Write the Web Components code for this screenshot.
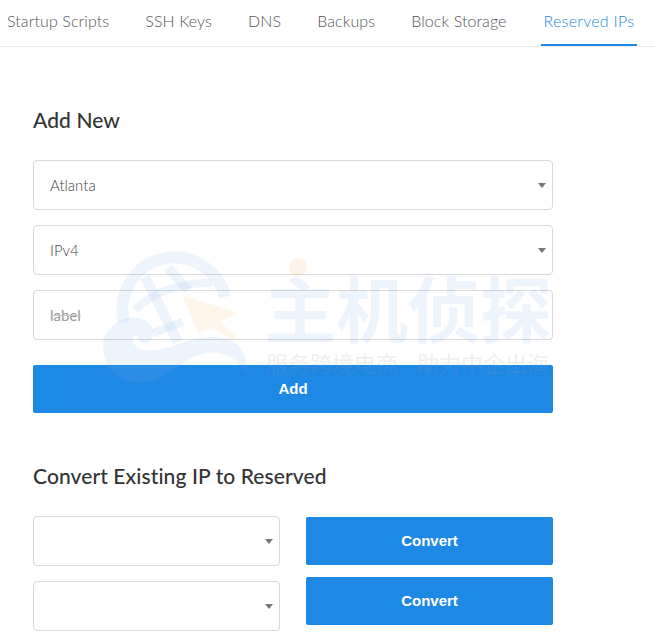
<!DOCTYPE html>
<html lang="en">
<head>
<meta charset="utf-8">
<title>Reserved IPs</title>
<style>
  html, body { margin: 0; background: #fff; }
  body { font-family: "Lato", "Open Sans", sans-serif; color: #333; }
</style>
</head>
<body>
<tab-bar>
  <tab-item>Startup Scripts</tab-item>
  <tab-item>SSH Keys</tab-item>
  <tab-item>DNS</tab-item>
  <tab-item>Backups</tab-item>
  <tab-item>Block Storage</tab-item>
  <tab-item active>Reserved IPs</tab-item>
</tab-bar>
<reserved-page>
  <form-section heading="Add New" slot="add">
    <div class="stack">
      <select-box>Atlanta</select-box>
      <select-box>IPv4</select-box>
      <text-box placeholder="label"></text-box>
      <blue-button high>Add</blue-button>
    </div>
  </form-section>
  <form-section heading="Convert Existing IP to Reserved" slot="convert">
    <convert-grid>
      <select-box slot="left"></select-box>
      <select-box slot="left"></select-box>
      <blue-button slot="right">Convert</blue-button>
      <blue-button slot="right">Convert</blue-button>
    </convert-grid>
  </form-section>
</reserved-page>
<water-mark></water-mark>

<script>
class TabBar extends HTMLElement {
    constructor() {
        super();
        this.attachShadow({ mode: 'open' }).innerHTML = `
            <style>
                :host {
                    display: flex;
                    height: 47px;
                    box-sizing: border-box;
                    padding-left: 4px;
                    border-bottom: 1px solid #eee;
                    gap: 30px;
                }
            </style>
            <slot></slot>
        `;
    }
}

class TabItem extends HTMLElement {
    constructor() {
        super();
        this.attachShadow({ mode: 'open' }).innerHTML = `
            <style>
                :host {
                    display: block;
                    height: 46px;
                    box-sizing: border-box;
                    padding: 12px 3px 0;
                    font: 300 16px/18px "Lato", sans-serif;
                    letter-spacing: .1px;
                    color: #555;
                }
                :host([active]) {
                    margin-left: 1px;
                    letter-spacing: .25px;
                    color: #1e88e5;
                    border-bottom: 2px solid #1e88e5;
                }
            </style>
            <slot></slot>
        `;
    }
}

class ReservedPage extends HTMLElement {
    constructor() {
        super();
        this.attachShadow({ mode: 'open' }).innerHTML = `
            <style>
                :host {
                    display: flex;
                    flex-direction: column;
                    gap: 49px;
                    width: 520px;
                    padding: 59px 0 0 33px;
                }
            </style>
            <slot name="add"></slot>
            <slot name="convert"></slot>
        `;
    }
}

class FormSection extends HTMLElement {
    constructor() {
        super();
        this.attachShadow({ mode: 'open' }).innerHTML = `
            <style>
                :host { display: block; }
                h2 {
                    margin: 0 0 26px;
                    font: 500 21px/28px "Lato", sans-serif;
                    letter-spacing: .1px;
                    color: #333;
                }
            </style>
            <h2></h2>
            <slot></slot>
        `;
    }

    connectedCallback() {
        this.shadowRoot.querySelector('h2').textContent = this.getAttribute('heading');
    }
}

class SelectBox extends HTMLElement {
    constructor() {
        super();
        this.attachShadow({ mode: 'open' }).innerHTML = `
            <style>
                :host {
                    display: flex;
                    align-items: center;
                    justify-content: space-between;
                    height: 50px;
                    box-sizing: border-box;
                    margin-bottom: 15px;
                    padding: 0 6px 0 16px;
                    border: 1px solid #d8d8d8;
                    border-radius: 4px;
                    background: #fff;
                    font: 300 15px "Lato", sans-serif;
                    color: #444;
                }
                i {
                    width: 0;
                    height: 0;
                    border: 4px solid transparent;
                    border-top: 5px solid #777;
                    border-bottom: 0;
                }
            </style>
            <span><slot></slot></span>
            <i></i>
        `;
    }
}

class TextBox extends HTMLElement {
    constructor() {
        super();
        this.attachShadow({ mode: 'open' }).innerHTML = `
            <style>
                :host {
                    display: flex;
                    align-items: center;
                    height: 50px;
                    box-sizing: border-box;
                    margin-bottom: 25px;
                    padding: 0 16px;
                    border: 1px solid #d8d8d8;
                    border-radius: 4px;
                    background: #fff;
                    font: 15px "Lato", sans-serif;
                    color: #999;
                }
                span { text-decoration: line-through #c8c8c8; }
            </style>
            <span></span>
        `;
    }

    connectedCallback() {
        this.shadowRoot.querySelector('span').textContent = this.getAttribute('placeholder');
    }
}

class BlueButton extends HTMLElement {
    constructor() {
        super();
        this.attachShadow({ mode: 'open' }).innerHTML = `
            <style>
                :host {
                    display: flex;
                    align-items: center;
                    justify-content: center;
                    height: 48px;
                    box-sizing: border-box;
                    padding-bottom: 2px;
                    border-radius: 2px;
                    background: #1e88e5;
                    color: #fff;
                    font: bold 15px "Liberation Sans", Arial, sans-serif;
                }
            </style>
            <slot></slot>
        `;
    }
}

class ConvertGrid extends HTMLElement {
    constructor() {
        super();
        this.attachShadow({ mode: 'open' }).innerHTML = `
            <style>
                :host {
                    display: grid;
                    grid-template-columns: 247px 247px;
                    column-gap: 26px;
                }
                .right {
                    display: flex;
                    flex-direction: column;
                    gap: 12px;
                    padding-top: 1px;
                }
            </style>
            <div><slot name="left"></slot></div>
            <div class="right"><slot name="right"></slot></div>
        `;
    }
}

// faint site stamp that sits over the form
class WaterMark extends HTMLElement {
    constructor() {
        super();
        this.attachShadow({ mode: 'open' }).innerHTML = `
            <style>
                :host {
                    position: absolute;
                    left: 100px;
                    top: 250px;
                    width: 460px;
                    height: 132px;
                    pointer-events: none;
                }
                svg { position: absolute; left: 0; top: 0; }
                .big {
                    position: absolute;
                    left: 164px;
                    top: 20px;
                    font: 700 72px/72px "Noto Sans CJK SC", sans-serif;
                    color: rgba(120, 170, 230, .13);
                    white-space: nowrap;
                }
                .dot {
                    position: absolute;
                    left: 189px;
                    top: 8px;
                    width: 18px;
                    height: 18px;
                    border-radius: 50%;
                    background: rgba(245, 170, 90, .14);
                }
                .small {
                    position: absolute;
                    left: 166px;
                    top: 100px;
                    font: 22px/24px "Noto Sans CJK SC", sans-serif;
                    word-spacing: 14px;
                    color: rgba(150, 155, 165, .18);
                    white-space: nowrap;
                }
            </style>
            <svg width="150" height="134" viewBox="0 0 150 134" fill="none">
                <g fill="rgb(120,170,230)" stroke="rgb(120,170,230)" fill-opacity=".13" stroke-opacity=".13">
                    <path d="M24 72A52 52 0 1 1 125 47" fill="none" stroke-width="12"/>
                    <path d="M45 27L78 92M68 18L88 40" fill="none" stroke-width="10"/>
                    <path d="M35 60C55 40 85 32 112 33M53 83L83 72" fill="none" stroke-width="8"/>
                    <path stroke="none" d="M3 93C4 82 14 72 27 68C38 66 48 70 52 77C55 84 52 92 46 93C40 94 37 88 38 85C34 85 32 88 33 91C34 98 44 102 57 100C70 98 82 92 94 89C106 86 122 85 134 92C144 98 148 112 147 124C143 116 136 108 122 104C108 100 96 104 86 111C76 118 66 127 47 132C32 135 18 128 10 119C5 112 3 102 3 93Z"/>
                </g>
                <path d="M82 45L138 63L120 72L137 87L132 90L113 78L98 83Z" fill="rgba(245,170,90,.12)"/>
            </svg>
            <div class="dot"></div>
            <div class="big">主机侦探</div>
            <div class="small">服务跨境电商 助力中企出海</div>
        `;
    }
}

customElements.define('tab-bar', TabBar);
customElements.define('tab-item', TabItem);
customElements.define('reserved-page', ReservedPage);
customElements.define('form-section', FormSection);
customElements.define('select-box', SelectBox);
customElements.define('text-box', TextBox);
customElements.define('blue-button', BlueButton);
customElements.define('convert-grid', ConvertGrid);
customElements.define('water-mark', WaterMark);
</script>
</body>
</html>
